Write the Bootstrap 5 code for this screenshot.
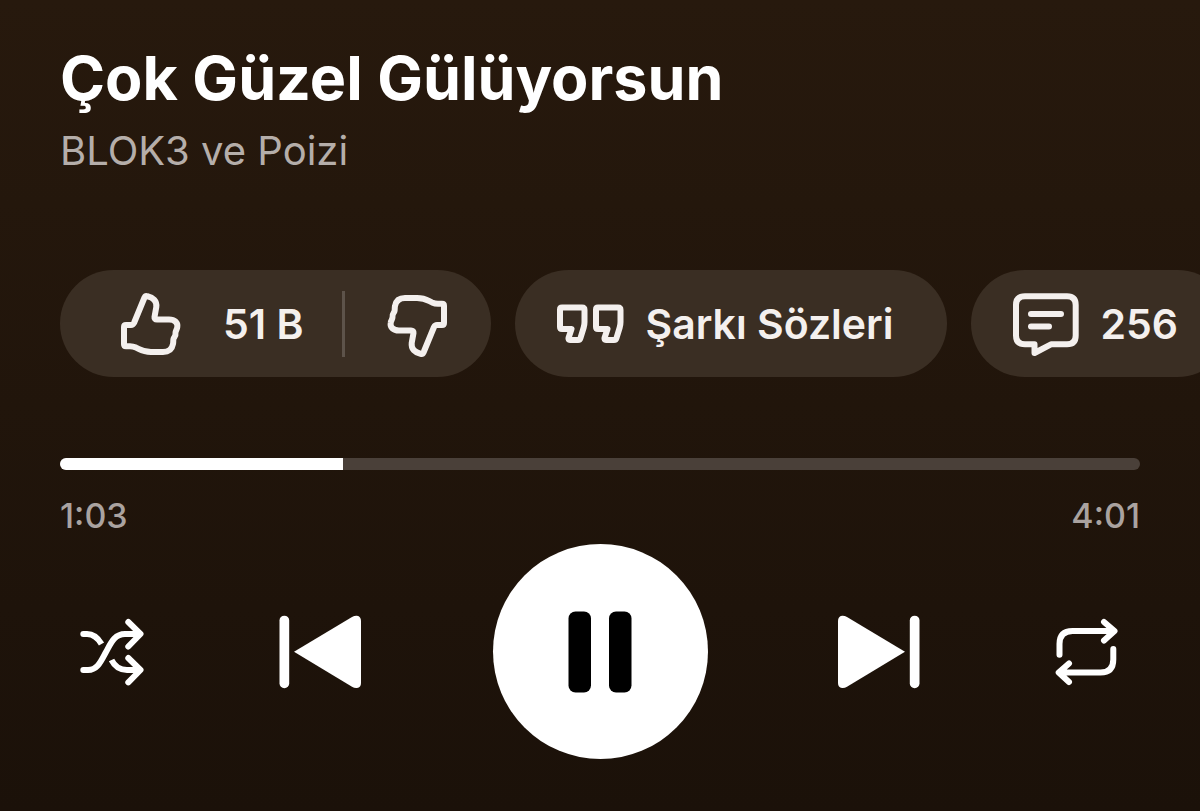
<!DOCTYPE html>
<html lang="tr">
<head>
<meta charset="utf-8">
<meta name="viewport" content="width=device-width, initial-scale=1">
<title>Çok Güzel Gülüyorsun</title>
<link href="https://cdn.jsdelivr.net/npm/bootstrap@5.3.0/dist/css/bootstrap.min.css" rel="stylesheet">
<style>
  body {
    font-family: Inter, "Liberation Sans", sans-serif;
    background: linear-gradient(#27190d, #1b1109) #1b1109;
    color: #fff;
  }
  .player { padding: 44px 0 52px; }
  .gutter { padding-left: 60px; padding-right: 60px; }
  .song { font-size: 61px; line-height: 68px; font-weight: 700; }
  .artist { font-size: 40px; line-height: 48px; font-weight: 400; color: #b5aeaa; margin-top: 15px; }
  .chips { margin-top: 95px; gap: 24px; padding-left: 60px; overflow: hidden; }
  .chip { height: 107px; border-radius: 54px; background: #3a2e23; font-size: 41px; line-height: 48px; font-weight: 600; }
  .chip, .chip .btn, .chip.btn:hover { color: #f4f0ee; }
  .chip.btn:hover { background: #3a2e23; }
  .chip .btn { font: inherit; border: 0; }
  .like { gap: 37px; padding: 0 39px 0 56px; }
  .dislike { padding: 0 39px 0 37px; }
  .split { width: 3px; height: 66px; background: #5d534a; }
  .lyrics, .comments { gap: 18px; padding: 0 53px 0 38px; border: 0; }
  .seek { height: 12px; border-radius: 6px; background: #4a4039; margin-top: 81px; }
  .times { font-size: 34px; line-height: 40px; font-weight: 500; color: #aaa3a0; margin-top: 26px; }
  .controls { margin-top: 8px; }
  .controls .btn { border: 0; padding: 0; color: #fff; }
  .edge { width: 104px; height: 104px; }
  .controls .play { width: 215px; height: 215px; background: #fff; color: #000; }
  svg { display: block; flex: none; }
  .ln { fill: none; stroke: currentColor; stroke-width: 6; stroke-linejoin: round; stroke-linecap: round; }
  .cut { stroke-linecap: butt; }
</style>
</head>
<body>
<main class="player d-flex flex-column min-vh-100">
  <header class="gutter">
    <h1 class="song m-0">Çok Güzel Gülüyorsun</h1>
    <p class="artist mb-0">BLOK3 ve Poizi</p>
  </header>

  <div class="chips d-flex">
    <div class="chip d-flex align-items-center flex-shrink-0">
      <button type="button" class="btn like d-flex align-items-center">
        <svg width="70" height="70" viewBox="0 0 70 70" aria-hidden="true"><path class="ln" d="M8 38Q8 36 10 36H15Q17 36 18 34L28.500 8.500Q29.500 6.500 31.500 7.300C37 8.500 41 12 40.300 18L38.500 28Q38.200 30.500 41 30.500H53C59 30.500 62 34 61.300 38C61 41 59.500 41.500 59.500 44C60 46.500 58.500 48 57.600 49.500C57 51 57.500 53 57 55C56 60.500 52.500 63 47 63H35C27 63 25 61 20 58.600Q17 57.300 14 57.300H10Q8 57.300 8 55.300Z"/></svg>
        <span>51 B</span>
      </button>
      <span class="split"></span>
      <button type="button" class="btn dislike" aria-label="Beğenme">
        <svg width="70" height="70" viewBox="0 0 70 70" aria-hidden="true"><path class="ln" transform="rotate(180 35 36)" d="M8 38Q8 36 10 36H15Q17 36 18 34L28.500 8.500Q29.500 6.500 31.500 7.300C37 8.500 41 12 40.300 18L38.500 28Q38.200 30.500 41 30.500H53C59 30.500 62 34 61.300 38C61 41 59.500 41.500 59.500 44C60 46.500 58.500 48 57.600 49.500C57 51 57.500 53 57 55C56 60.500 52.500 63 47 63H35C27 63 25 61 20 58.600Q17 57.300 14 57.300H10Q8 57.300 8 55.300Z"/></svg>
      </button>
    </div>
    <button type="button" class="btn chip lyrics d-flex align-items-center flex-shrink-0">
      <svg width="74" height="50" viewBox="0 0 74 50" aria-hidden="true"><g class="ln"><path id="quote" d="M9 8.500H29Q31.500 8.500 31.500 11V23Q31.500 26 30.700 28.500L27.500 39Q27 41 25 41H17Q15 41 15.500 39L18.500 30H9Q7 30 7 28V10.500Q7 8.500 9 8.500Z"/><use href="#quote" x="36"/></g></svg>
      <span>Şarkı Sözleri</span>
    </button>
    <button type="button" class="btn chip comments d-flex align-items-center flex-shrink-0">
      <svg width="74" height="70" viewBox="0 -1 74 70" aria-hidden="true"><path class="ln" d="M42 54.300H58Q66.700 54.300 66.700 45.500V15Q66.700 6.300 58 6.300H16Q7 6.300 7 15V45.500Q7 54.300 16 54.300H25.500V63ZM22 24H52M22 36.500H40"/></svg>
      <span>256</span>
    </button>
  </div>

  <div class="gutter">
    <div class="progress seek" role="progressbar" aria-label="Şarkı konumu" aria-valuenow="63" aria-valuemin="0" aria-valuemax="241">
      <div class="progress-bar bg-white" style="width:26.200%"></div>
    </div>
    <div class="times d-flex justify-content-between"><span>1:03</span><span>4:01</span></div>
    <div class="controls d-flex justify-content-between align-items-center">
      <button type="button" class="btn edge d-flex align-items-center justify-content-center" aria-label="Karıştır">
        <svg width="70" height="70" viewBox="0 0 70 70" aria-hidden="true"><g class="ln"><path d="M6.300 53H11C21 53 24.500 43 29 35S37 17 48 17H62M51.300 5L63.500 17L51.300 29.500M51.300 41L63.500 53L51.300 65.300"/><path class="cut" d="M6.300 17H10C17 17 21 21 24.500 27M34.500 43C38 50 43 53 50 53H62"/></g><circle cx="6.300" cy="17" r="3" fill="currentColor"/></svg>
      </button>
      <button type="button" class="btn" aria-label="Önceki">
        <svg width="86" height="76" viewBox="0 0 86 76" fill="currentColor" aria-hidden="true"><rect x="2.500" y="1.700" width="9.700" height="72.500" rx="4.800"/><path d="M17 37.700L75 3Q77.500 1.600 80 1.800Q84 2.500 84 7V69Q84 73.500 80 74Q77.500 74.300 75 72.800Z"/></svg>
      </button>
      <button type="button" class="btn play rounded-circle mx-3 d-flex align-items-center justify-content-center" aria-label="Duraklat">
        <svg width="64" height="82" viewBox="0 0 64 82" fill="currentColor" aria-hidden="true"><rect x="0.500" y="0.500" width="22.500" height="81" rx="7"/><rect x="41" y="0.500" width="22.500" height="81" rx="7"/></svg>
      </button>
      <button type="button" class="btn" aria-label="Sonraki">
        <svg width="86" height="76" viewBox="0 0 86 76" fill="currentColor" aria-hidden="true"><g transform="matrix(-1 0 0 1 85 0)"><rect x="2.500" y="1.700" width="9.700" height="72.500" rx="4.800"/><path d="M17 37.700L75 3Q77.500 1.600 80 1.800Q84 2.500 84 7V69Q84 73.500 80 74Q77.500 74.300 75 72.800Z"/></g></svg>
      </button>
      <button type="button" class="btn edge d-flex align-items-center justify-content-center" aria-label="Tekrarla">
        <svg width="66" height="70" viewBox="1 0 66 70" aria-hidden="true"><path class="ln" d="M5.500 37.700V27Q5.500 14 18.500 14H60M50 5L60.500 14L50 23.500M59.300 32V42.500Q59.300 55.500 46.500 55.500H6M15 46.500L4.700 55.500L15 65"/></svg>
      </button>
    </div>
  </div>
</main>
<script src="https://cdn.jsdelivr.net/npm/bootstrap@5.3.0/dist/js/bootstrap.bundle.min.js"></script>
</body>
</html>
